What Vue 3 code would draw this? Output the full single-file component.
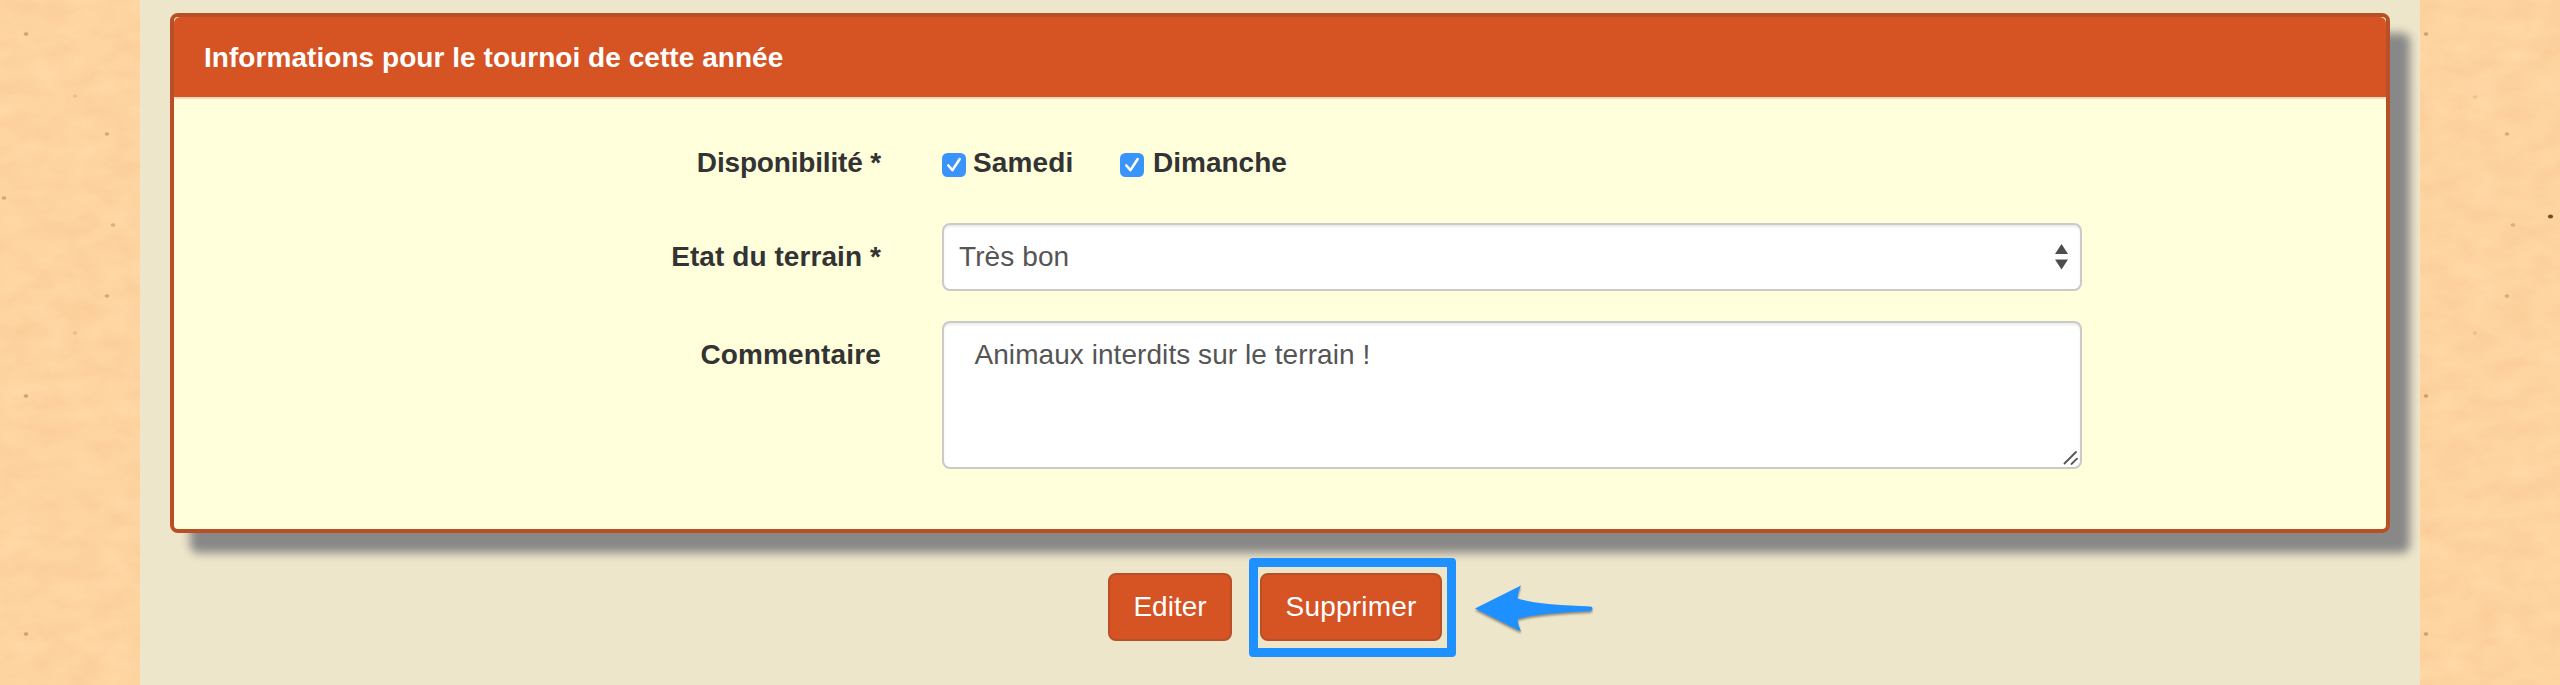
<script setup>
const days = [
  { name: 'Samedi', cls: 'samedi' },
  { name: 'Dimanche', cls: 'dimanche' },
]
const specks = [
  [26, 34, 0.4], [75, 96, 0.15], [107, 134, 0.35], [4, 198, 0.35], [113, 225, 0.3],
  [107, 296, 0.35], [75, 333, 0.15], [26, 396, 0.4], [26, 634, 0.4],
  [2426, 34, 0.4], [2475, 97, 0.15], [2507, 134, 0.32], [2513, 225, 0.28],
  [2507, 296, 0.32], [2475, 333, 0.15], [2426, 396, 0.4], [2426, 634, 0.4],
]
</script>

<template>
  <div class="page">
    <svg class="paper" width="2560" height="685" viewBox="0 0 2560 685" aria-hidden="true">
      <defs>
        <filter id="grain" x="0" y="0" width="100%" height="100%" color-interpolation-filters="sRGB">
          <feTurbulence type="fractalNoise" baseFrequency="0.03 0.05" numOctaves="4" seed="8" />
          <feColorMatrix values="0 0 0 0 0.95  0 0 0 0 0.7  0 0 0 0 0.48  0.42 0 0 0 -0.08" />
        </filter>
      </defs>
      <rect width="140" height="685" filter="url(#grain)" />
      <rect x="2420" width="140" height="685" filter="url(#grain)" />
      <ellipse v-for="(s, i) in specks" :key="i" :cx="s[0]" :cy="s[1]" rx="2.4" ry="1.8" fill="#8a5530" :opacity="s[2]" />
      <ellipse cx="2550.5" cy="216.5" rx="2.6" ry="2.1" fill="#6b3d17" opacity=".9" />
    </svg>

    <main class="content">
      <section class="panel">
        <header class="panel-head"><span class="title">Informations pour le tournoi de cette année</span></header>
        <div class="panel-body">
          <div class="row row-days">
            <span class="label l-dispo">Disponibilité *</span>
            <div class="days">
              <span v-for="d in days" :key="d.name" class="day" :class="d.cls">
                <svg class="check" width="24" height="24" viewBox="0 0 24 24">
                  <rect width="24" height="24" rx="5.5" fill="#3995fb" />
                  <path d="M6.3 13.2 10.4 18 17.6 6.8" fill="none" stroke="#2275d8" stroke-width="2.6" stroke-linecap="round" stroke-linejoin="round" opacity=".5" />
                  <path d="M6.3 12.5 10.4 17.2 17.6 6.2" fill="none" stroke="#fff" stroke-width="2.6" stroke-linecap="round" stroke-linejoin="round" />
                </svg>
                <span class="day-name">{{ d.name }}</span>
              </span>
            </div>
          </div>
          <div class="row row-state">
            <span class="label field-label l-etat">Etat du terrain *</span>
            <div class="field select">
              <span class="v-select">Très bon</span>
              <svg width="13" height="26" viewBox="0 0 13 26">
                <path d="M6.5 0 13 10H0zM0 15.5H13L6.5 25.5z" fill="#4d4d4d" />
              </svg>
            </div>
          </div>
          <div class="row row-comment">
            <span class="label field-label l-comm">Commentaire</span>
            <div class="field area">
              <span class="v-area">Animaux interdits sur le terrain !</span>
              <svg class="grip" width="15" height="15" viewBox="0 0 15 15">
                <path d="M1.5 13.5 13 2M8.5 14 14 8.7" stroke="#555" stroke-width="1.8" stroke-linecap="round" />
              </svg>
            </div>
          </div>
        </div>
      </section>

      <div class="actions">
        <button class="btn edit"><span>Editer</span></button>
        <div class="target">
          <button class="btn remove"><span>Supprimer</span></button>
        </div>
        <svg class="arrow" width="126" height="60" viewBox="0 0 126 60">
          <path d="M3 29.500 49 6.500Q46 13 45.500 19.500C61 24.500 90 26.500 118.500 27.500Q120.500 27.500 120.500 29.500T118.500 32C90 33 61 35.500 45.500 40Q46 46 49 52.500Z" fill="#1e90ff" />
        </svg>
      </div>
    </main>
  </div>
</template>

<style>
html, body { margin: 0; overflow: hidden; }
</style>

<style scoped>
.page {
  position: relative;
  width: 2560px;
  height: 685px;
  overflow: hidden;
  background: #ffd8a5;
  font-family: "Liberation Sans", Arial, sans-serif;
  font-size: 28px;
  line-height: 40px;
  color: #333;
}
.paper { position: absolute; inset: 0; }
.content {
  position: relative;
  box-sizing: border-box;
  width: 2280px;
  height: 685px;
  margin: 0 auto;
  padding: 13px 30px 0;
  background: #eee6ca;
}
.panel {
  box-sizing: border-box;
  height: 520px;
  border: 4px solid #b94f27;
  border-radius: 8px;
  background: #ffffdc;
  box-shadow: 20px 20px 10px #888;
}
.panel-head {
  box-sizing: border-box;
  height: 82px;
  padding: 21px 30px 0;
  border-bottom: 2px solid #fbd8bd;
  border-radius: 6px 6px 0 0;
  background: #d65323;
  background-clip: padding-box;
  color: #fff;
  font-weight: bold;
}
.title, .label, .day-name, .field span, .btn span { white-space: nowrap; }
.title { letter-spacing: 0.05px; }
.panel-body { padding-top: 44px; }
.row { display: flex; gap: 61px; }
.row-days { height: 40px; margin-bottom: 40px; }
.row-state { height: 68px; margin-bottom: 30px; }
.row-comment { height: 148px; }
.label { width: 707px; text-align: right; font-weight: bold; }
.field-label { padding-top: 14px; }
.l-dispo { letter-spacing: -0.17px; }
.l-etat { letter-spacing: 0.08px; }
.l-comm { letter-spacing: 0.15px; }
.days { display: flex; }
.day { display: flex; align-items: flex-start; width: 178px; font-weight: bold; }
.check { margin: 10px 7px 0 0; flex: none; }
.samedi .day-name { letter-spacing: 0.15px; }
.dimanche .check { margin-right: 9px; }
.field {
  box-sizing: border-box;
  width: 1140px;
  border: 2px solid #ccc9c9;
  border-radius: 8px;
  background: #fff;
  color: #555;
  box-shadow: inset 0 2px 2px rgba(0, 0, 0, 0.075);
}
.select { display: flex; align-items: flex-start; justify-content: space-between; padding: 12px 12px 0 15px; }
.select svg { margin-top: 7px; }
.v-select { letter-spacing: 0.1px; }
.area { position: relative; padding: 12px 30.5px; }
.v-area { letter-spacing: 0.06px; }
.grip { position: absolute; right: 2px; bottom: 2px; }
.actions { display: flex; height: 68px; margin: 40px 0 0 938px; }
.btn {
  box-sizing: border-box;
  height: 68px;
  padding: 0;
  border: 2px solid #b94f27;
  border-radius: 8px;
  background: #d65323;
  color: #fff;
  font: inherit;
  text-align: center;
}
.edit { width: 124px; }
.remove { width: 182px; letter-spacing: 0.2px; }
.target {
  box-sizing: border-box;
  width: 207px;
  height: 99px;
  margin: -15px 0 0 17px;
  padding: 6px 2px;
  border: 9px solid #1e90ff;
  border-radius: 4px;
}
.arrow { margin: 6px 0 0 16px; filter: drop-shadow(0 2px 1px rgba(0, 0, 0, 0.4)); }
</style>
